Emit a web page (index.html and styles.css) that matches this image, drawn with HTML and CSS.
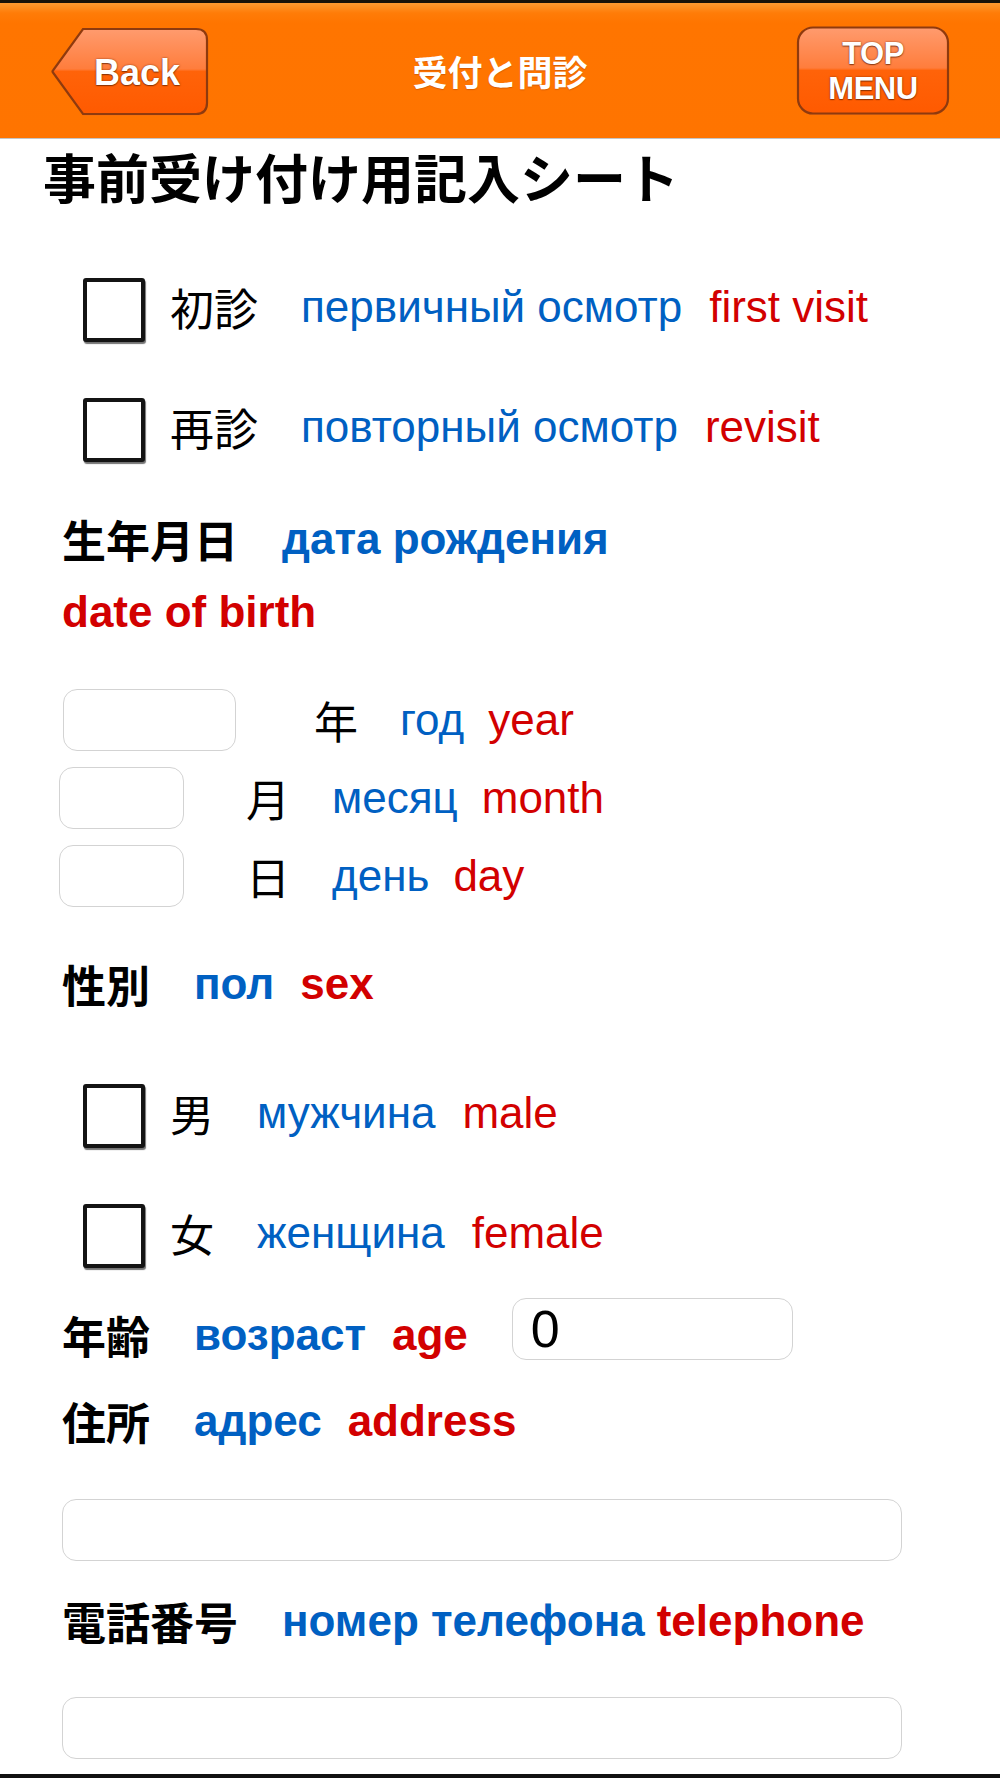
FILE: index.html
```html
<!DOCTYPE html>
<html lang="ja">
<head>
<meta charset="utf-8">
<title>受付と問診</title>
<link rel="stylesheet" href="styles.css">
</head>
<body>
<header class="topbar">
  <button class="hbtn back-btn" type="button">
    <svg class="hbtn-bg" width="160" height="92" viewBox="0 0 160 92">
      <defs>
        <linearGradient id="gb" x1="0" y1="0" x2="0" y2="1">
          <stop offset="0" stop-color="#ff9b6e"/>
          <stop offset="0.47" stop-color="#ff7d3c"/>
          <stop offset="0.5" stop-color="#ff6309"/>
          <stop offset="1" stop-color="#ff5a00"/>
        </linearGradient>
      </defs>
      <path d="M33 4.5 H146 Q157 4.5 157 15.5 V78.5 Q157 89.5 146 89.5 H33 L3 48 Q2 47 3 46 Z" fill="#e66a1c" opacity="0.6"/>
      <path d="M33 3 H146 Q157 3 157 14 V77 Q157 88 146 88 H33 L3 46.5 Q2 45.5 3 44.5 Z" fill="url(#gb)" stroke="#8f3a0e" stroke-width="2.2"/>
    </svg>
    <span class="hbtn-text back-text">Back</span>
  </button>
  <h1 class="title">受付と問診</h1>
  <button class="hbtn top-btn" type="button">
    <svg class="hbtn-bg" width="154" height="92" viewBox="0 0 154 92">
      <defs>
        <linearGradient id="gt" x1="0" y1="0" x2="0" y2="1">
          <stop offset="0" stop-color="#ff9b6e"/>
          <stop offset="0.47" stop-color="#ff7d3c"/>
          <stop offset="0.5" stop-color="#ff6309"/>
          <stop offset="1" stop-color="#ff5a00"/>
        </linearGradient>
      </defs>
      <rect x="2" y="4" width="150" height="86" rx="15" ry="15" fill="#e66a1c" opacity="0.6"/>
      <rect x="2" y="2.5" width="150" height="86" rx="15" ry="15" fill="url(#gt)" stroke="#8f3a0e" stroke-width="2.2"/>
    </svg>
    <span class="hbtn-text top-text">TOP<br>MENU</span>
  </button>
</header>

<main class="form">
  <h2 class="heading">事前受け付け用記入シート</h2>

  <div class="check-row first">
    <span class="box"></span>
    <span class="ja">初診</span>
    <span class="ru">первичный осмотр</span>
    <span class="en">first visit</span>
  </div>
  <div class="check-row second">
    <span class="box"></span>
    <span class="ja">再診</span>
    <span class="ru">повторный осмотр</span>
    <span class="en">revisit</span>
  </div>

  <div class="label-row dob">
    <span class="ja">生年月日</span>
    <span class="ru">дата рождения</span>
  </div>
  <div class="label-row dob-en">
    <span class="en">date of birth</span>
  </div>

  <div class="date-row year-row">
    <input class="field w-year" type="text">
    <span class="ja gap-year">年</span>
    <span class="ru">год</span>
    <span class="en">year</span>
  </div>
  <div class="date-row md-row">
    <input class="field w-md" type="text">
    <span class="ja gap-md">月</span>
    <span class="ru">месяц</span>
    <span class="en">month</span>
  </div>
  <div class="date-row md-row">
    <input class="field w-md" type="text">
    <span class="ja gap-md">日</span>
    <span class="ru">день</span>
    <span class="en">day</span>
  </div>

  <div class="label-row sex">
    <span class="ja">性別</span>
    <span class="ru">пол</span>
    <span class="en">sex</span>
  </div>

  <div class="check-row male">
    <span class="box"></span>
    <span class="ja">男</span>
    <span class="ru">мужчина</span>
    <span class="en">male</span>
  </div>
  <div class="check-row second">
    <span class="box"></span>
    <span class="ja">女</span>
    <span class="ru">женщина</span>
    <span class="en">female</span>
  </div>

  <div class="label-row age-row">
    <span class="ja">年齢</span>
    <span class="ru">возраст</span>
    <span class="en">age</span>
    <input class="field w-age" type="text" value="0">
  </div>

  <div class="label-row addr">
    <span class="ja">住所</span>
    <span class="ru">адрес</span>
    <span class="en">address</span>
  </div>
  <div class="wide-row addr-input">
    <input class="field w-wide" type="text">
  </div>

  <div class="label-row tel">
    <span class="ja">電話番号</span>
    <span class="ru">номер телефона</span>
    <span class="en tight">telephone</span>
  </div>
  <div class="wide-row tel-input">
    <input class="field w-wide" type="text">
  </div>
</main>
<div class="bottom-rule"></div>
</body>
</html>
```

FILE: styles.css
```css
* { box-sizing: border-box; }

html, body {
  margin: 0;
  padding: 0;
  background: #fff;
}

body {
  width: 1000px;
  font-family: "Liberation Sans", "Noto Sans CJK JP", sans-serif;
  color: #000;
}

/* ---------- header ---------- */
.topbar {
  height: 139px;
  border-top: 3px solid #1a1208;
  border-bottom: 1px solid #c4c4c4;
  background: linear-gradient(#ff9a30 0, #ff7c08 10px, #ff7500 20px, #ff7400 100%);
  display: grid;
  grid-template-columns: 1fr auto 1fr;
  align-items: center;
  padding: 0 50px 0 50px;
}

.hbtn {
  display: grid;
  padding: 0;
  margin: 0;
  border: 0;
  background: transparent;
  cursor: pointer;
  font-family: "Liberation Sans", sans-serif;
}

.hbtn > * {
  grid-area: 1 / 1;
}

.hbtn-bg {
  display: block;
}

.hbtn-text {
  color: #fff;
  font-weight: bold;
  text-shadow: 0 0 2px rgba(90, 30, 0, 0.75), 0 1px 1px rgba(90, 30, 0, 0.6);
  align-self: center;
  justify-self: center;
}

.back-btn {
  justify-self: start;
  margin-top: 2px;
}

.back-text {
  font-size: 36px;
  line-height: 40px;
  padding-left: 14px;
  padding-top: 2px;
}

.top-btn {
  justify-self: end;
  margin-top: 0;
}

.top-text {
  font-size: 31px;
  line-height: 35px;
  text-align: center;
  letter-spacing: -0.5px;
}

.title {
  margin: 0;
  color: #fff;
  font-family: "Noto Sans CJK JP", sans-serif;
  font-size: 35px;
  font-weight: bold;
  line-height: 40px;
  text-shadow: 0 1px 1px rgba(140, 50, 0, 0.35);
}

/* ---------- form ---------- */
.form {
  display: flex;
  flex-direction: column;
}

.heading {
  margin: 7px 0 0 43px;
  font-family: "Noto Sans CJK JP", sans-serif;
  font-size: 53px;
  font-weight: bold;
  line-height: 60px;
  height: 60px;
  letter-spacing: 0;
}

.ja {
  font-family: "Noto Sans CJK JP", sans-serif;
  color: #000;
}

.ru {
  color: #0060c2;
  margin-left: 43px;
}

.en {
  color: #d20000;
  margin-left: 25px;
}

.en.tight {
  margin-left: 12px;
}

/* checkbox rows */
.check-row {
  display: flex;
  align-items: center;
  height: 64px;
  padding-left: 83px;
  font-size: 44px;
  line-height: 50px;
}

.check-row.first { margin-top: 72px; }
.check-row.second { margin-top: 56px; }
.check-row.male { margin-top: 70px; }

.check-row .ja {
  margin-left: 25px;
  margin-top: -6px;
}

.check-row .ru,
.check-row .en {
  margin-top: -6px;
}

.check-row .en { margin-left: 27px; }

.box {
  width: 62px;
  height: 64px;
  flex: none;
  border: 4px solid #141414;
  border-radius: 3px;
  background: #fff;
  box-shadow: 1px 2px 1px rgba(0, 0, 0, 0.55);
}

/* bold label rows */
.label-row {
  display: flex;
  align-items: center;
  height: 60px;
  padding-left: 62px;
  font-size: 44px;
  line-height: 50px;
  font-weight: bold;
}

.label-row .ru { margin-left: 44px; }
.label-row .en { margin-left: 26px; }
.label-row .en.tight { margin-left: 12px; }

.dob { margin-top: 47px; }
.dob-en { margin-top: 13px; }
.dob-en .en { margin-left: 0; }
.sex { margin-top: 47px; }
.addr { margin-top: 31px; }
.tel { margin-top: 30px; }

.age-row {
  margin-top: 30px;
  height: 62px;
}

.age-row .ja,
.age-row .ru,
.age-row .en {
  padding-top: 12px;
}

/* input fields */
.field {
  display: block;
  flex: none;
  height: 62px;
  margin: 0;
  border: 1.5px solid #d3d3d3;
  border-radius: 14px;
  background: #fff;
  padding: 0 18px;
  font-family: "Liberation Sans", sans-serif;
  font-size: 52px;
  font-weight: normal;
  color: #000;
  outline: none;
}

.w-year { width: 173px; margin-left: 63px; }
.w-md { width: 125px; margin-left: 59px; }
.w-age { width: 281px; margin-left: 44px; }
.w-wide { width: 840px; margin-left: 62px; }

.date-row {
  display: flex;
  align-items: center;
  height: 62px;
  font-size: 44px;
  line-height: 50px;
}

.year-row { margin-top: 47px; }
.md-row { margin-top: 16px; }

.gap-year { margin-left: 78px; }
.gap-md { margin-left: 62px; }

.date-row .ru { margin-left: 42px; }
.date-row .en { margin-left: 24px; }

.wide-row {
  display: flex;
}

.addr-input { margin-top: 48px; }
.tel-input { margin-top: 46px; }

.bottom-rule {
  margin-top: 15px;
  height: 4px;
  background: #111;
}
```
